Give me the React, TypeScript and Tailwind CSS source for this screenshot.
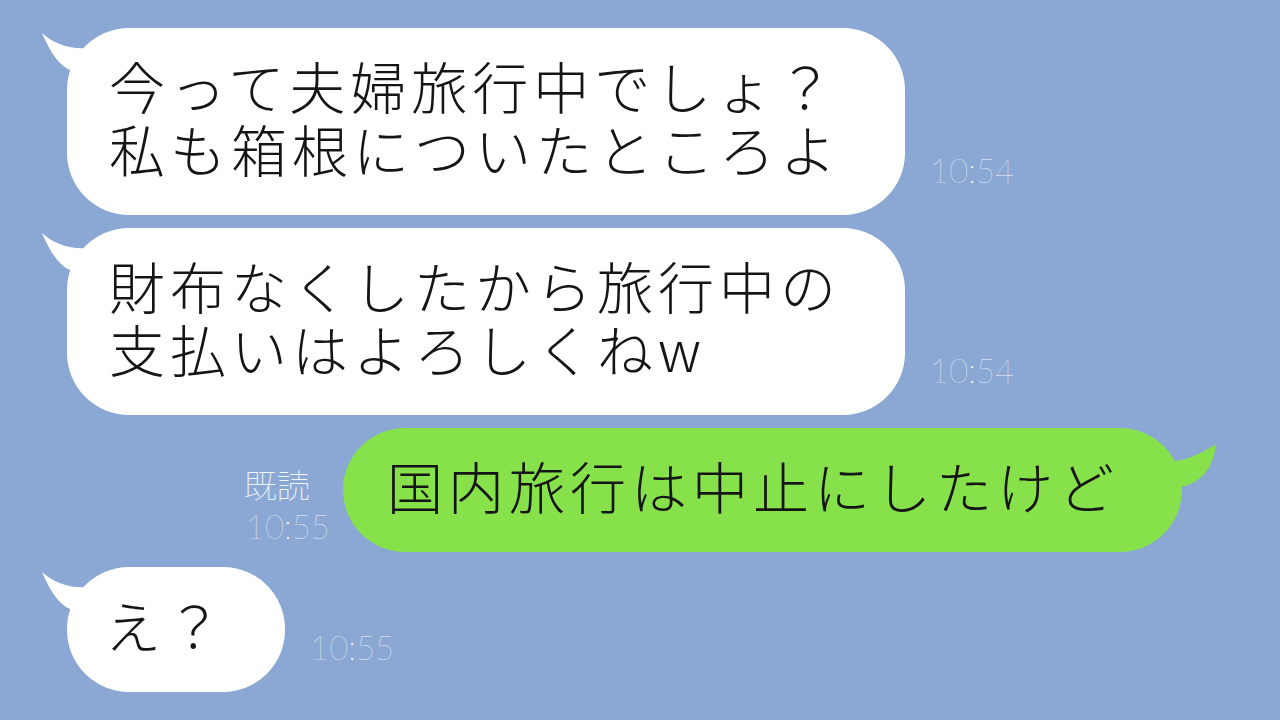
const jp = "font-['Noto_Sans_CJK_JP','Noto_Sans_CJK_SC',sans-serif]"

function LeftTail() {
  return (
    <svg className="absolute left-[-26px] top-[4px]" width="70" height="52" viewBox="0 0 70 52">
      <path d="M1 1 Q20 18 46 16 L70 52 L29 52 L29 38 Q14 32 1 1 Z" fill="#ffffff" />
    </svg>
  )
}

function RightTail() {
  return (
    <svg className="absolute right-[-40px] top-0" width="60" height="80" viewBox="0 0 60 80">
      <path d="M54 16 Q30 32 8 34 L0 62 L19 59 Q50 52 54 16 Z" fill="#86e14b" />
    </svg>
  )
}

function Time({ children, className = '' }: { children: React.ReactNode; className?: string }) {
  return (
    <div
      className={`font-['Lato','Liberation_Sans',sans-serif] text-[33px] font-thin leading-[33px] text-white/90 ${className}`}
    >
      {children}
    </div>
  )
}

function Incoming({
  lines,
  width,
  height,
  time,
  pad = 'pl-[42px]',
}: {
  lines: string[]
  width: string
  height: string
  time: string
  pad?: string
}) {
  return (
    <div className="flex items-end pl-[67px]">
      <div className={`relative flex items-center rounded-[62px] bg-white ${width} ${height} ${pad}`}>
        <LeftTail />
        <div className={`relative whitespace-nowrap pb-[12px] text-[56px] font-light leading-[63px] tracking-[5px] text-[#151515] ${jp}`}>
          {lines.map((l) => (
            <div key={l} className="h-[63px]">{l}</div>
          ))}
        </div>
      </div>
      <Time className="mb-[28px] ml-[25px]">{time}</Time>
    </div>
  )
}

export default function App() {
  return (
    <div className="flex h-[720px] w-[1280px] flex-col overflow-hidden bg-[#8aa8d3] pt-[28px]">
      <Incoming
        lines={['今って夫婦旅行中でしょ？', '私も箱根についたところよ']}
        width="w-[838px]"
        height="h-[187px]"
        time="10:54"
      />
      <div className="mt-[13px]">
        <Incoming
          lines={['財布なくしたから旅行中の', '支払いはよろしくねw']}
          width="w-[838px]"
          height="h-[187px]"
          time="10:54"
        />
      </div>

      <div className="mt-[13px] flex items-end justify-end pr-[98px]">
        <div className="mb-[9px] mr-[13px] flex flex-col items-start">
          <div className={`text-[33px] font-thin leading-[36px] text-white/90 ${jp} ml-[-2px] mb-[8px]`}>既読</div>
          <Time>10:55</Time>
        </div>
        <div className="relative flex h-[124px] w-[839px] items-center rounded-[62px] bg-[#86e14b] pl-[44px]">
          <RightTail />
          <div className={`relative whitespace-nowrap pb-[12px] text-[56px] font-light leading-[63px] tracking-[5px] text-[#151515] ${jp}`}>
            国内旅行は中止にしたけど
          </div>
        </div>
      </div>

      <div className="mt-[15px]">
        <Incoming lines={['え？']} width="w-[218px]" height="h-[125px]" time="10:55" pad="pl-[38px]" />
      </div>
    </div>
  )
}
